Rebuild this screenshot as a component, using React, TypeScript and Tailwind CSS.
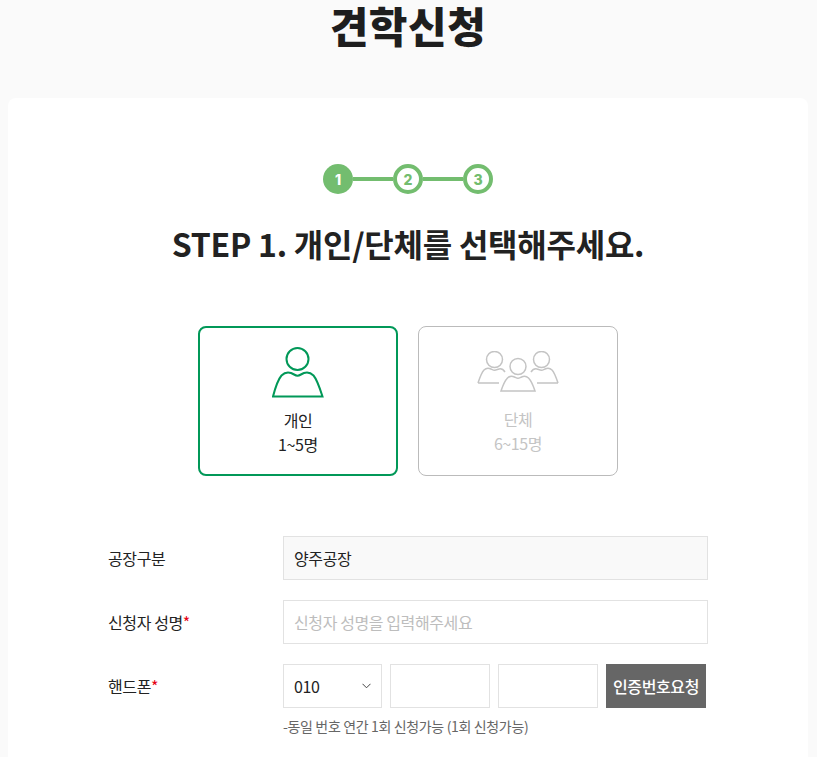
import React from "react";

const font = { fontFamily: '"Noto Sans CJK KR", "Noto Sans", sans-serif' };

const Step = ({ n, active }: { n: number; active?: boolean }) => (
  <div
    className={
      active
        ? "flex h-[30px] w-[30px] items-center justify-center rounded-full bg-[#73bd6f] text-[14px] font-extrabold text-white"
        : "flex h-[30px] w-[30px] items-center justify-center rounded-full border-[4px] border-[#73bd6f] bg-white text-[14px] font-extrabold text-[#73bd6f]"
    }
    style={{ fontFamily: "Inter, sans-serif" }}
  >
    {n}
  </div>
);

const Row = ({ label, required, children }: { label: string; required?: boolean; children: React.ReactNode }) => (
  <div className="flex items-start">
    <div className="flex h-[44px] w-[175px] items-center text-[16px] tracking-tight text-[#222]">
      {label}
      {required && <span className="text-[#e60012]">*</span>}
    </div>
    <div className="flex-1">{children}</div>
  </div>
);

export default function App() {
  return (
    <div className="h-[757px] w-[817px] overflow-hidden bg-[#fafafa] px-2" style={font}>
      <div className="w-[800px]">
        <h1 className="flex h-[98px] justify-center text-[42px] leading-[50px] font-black tracking-[0.5px] text-[#1e1e1e]">
          견학신청
        </h1>
        <div className="h-[700px] rounded-t-[8px] bg-white pt-[66px]">
          <div className="flex items-center justify-center">
            <Step n={1} active />
            <div className="h-[4px] w-[40px] bg-[#73bd6f]" />
            <Step n={2} />
            <div className="h-[4px] w-[40px] bg-[#73bd6f]" />
            <Step n={3} />
          </div>
          <h2 className="mt-[26px] text-center text-[32px] leading-[46px] font-bold tracking-[-0.25px] text-[#222]">
            STEP 1. 개인/단체를 선택해주세요.
          </h2>
          <div className="mt-[60px] flex justify-center gap-[20px]">
            <div className="flex h-[150px] w-[200px] flex-col items-center rounded-[8px] border-2 border-[#019858] pt-[19px] text-[16px] leading-[24px] tracking-tight text-[#222]">
              <svg width="52" height="51" viewBox="0 0 52 51" fill="none" stroke="#019858" strokeWidth="2">
                <circle cx="25.5" cy="12" r="11" />
                <path d="M1 49.500 H50.500 C47.500 40 45 32.500 41.500 28.500 C38.500 25.500 35 25 32 26 C29.500 27 27.500 28.700 25.500 28.700 C23.500 28.700 21.500 27 19 26 C16 25 12.500 25.500 9.500 28.500 C6 32.500 3.500 40 1 49.500 Z" />
              </svg>
              <div className="mt-[10px]">개인</div>
              <div>1~5명</div>
            </div>
            <div className="flex h-[150px] w-[200px] flex-col items-center rounded-[8px] border border-[#bbbbbb] pt-[24px] text-[16px] leading-[24px] tracking-tight text-[#c4c4c4]">
              <svg width="82" height="42" viewBox="0 0 82 42" fill="none" stroke="#c4c4c4" strokeWidth="1.5">
                <circle cx="17.500" cy="8.500" r="8" />
                <circle cx="64.500" cy="8.500" r="8" />
                <path d="M1 32 H22 M1 32 C3 26 5 21 7 19 C9 17 12 17 14 18 C15.500 18.700 16.500 19.300 17.500 19.300 C18.500 19.300 20 18.700 22 18 C24 17.500 26 18 28 21" />
                <path d="M81 32 H60 M81 32 C79 26 77 21 75 19 C73 17 70 17 68 18 C66.500 18.700 65.500 19.300 64.500 19.300 C63.500 19.300 62 18.700 60 18 C58 17.500 56 18 54 21" />
                <circle cx="41" cy="15.500" r="8" />
                <path d="M24 40 H58 C56 34 54.500 30 51.500 27 C49.500 25 46.500 25 44.500 26 C43 26.700 42 27.300 41 27.300 C40 27.300 39 26.700 37.500 26 C35.500 25 32.500 25 30.500 27 C27.500 30 26 34 24 40 Z" />
              </svg>
              <div className="mt-[14px]">단체</div>
              <div>6~15명</div>
            </div>
          </div>
          <div className="mt-[60px] flex flex-col gap-[20px] px-[100px]">
            <Row label="공장구분">
              <div className="flex h-[44px] items-center border border-[#e2e2e2] bg-[#f9f9f9] px-[10px] text-[16px] tracking-tight text-[#222]">
                양주공장
              </div>
            </Row>
            <Row label="신청자 성명" required>
              <div className="flex h-[44px] items-center border border-[#e2e2e2] px-[10px] text-[16px] tracking-tight text-[#bdbdbd]">
                신청자 성명을 입력해주세요
              </div>
            </Row>
            <Row label="핸드폰" required>
              <div className="flex gap-[8px]">
                <div className="flex h-[44px] w-[99px] items-center justify-between border border-[#e2e2e2] px-[10px] text-[16px] tracking-tight text-[#222]">
                  010
                  <svg width="9" height="6" viewBox="0 0 9 6" fill="none" stroke="#444" strokeWidth="1">
                    <path d="M0.5 0.8 L4.500 4.8 L8.500 0.8" />
                  </svg>
                </div>
                <div className="h-[44px] w-[100px] border border-[#e2e2e2]" />
                <div className="h-[44px] w-[100px] border border-[#e2e2e2]" />
                <div className="flex h-[44px] w-[100px] items-center justify-center bg-[#666666] text-[16px] font-medium tracking-tight text-white">
                  인증번호요청
                </div>
              </div>
              <p className="mt-[8px] text-[14px] leading-[20px] tracking-tight text-[#666]">-동일 번호 연간 1회 신청가능 (1회 신청가능)</p>
            </Row>
          </div>
        </div>
      </div>
    </div>
  );
}
